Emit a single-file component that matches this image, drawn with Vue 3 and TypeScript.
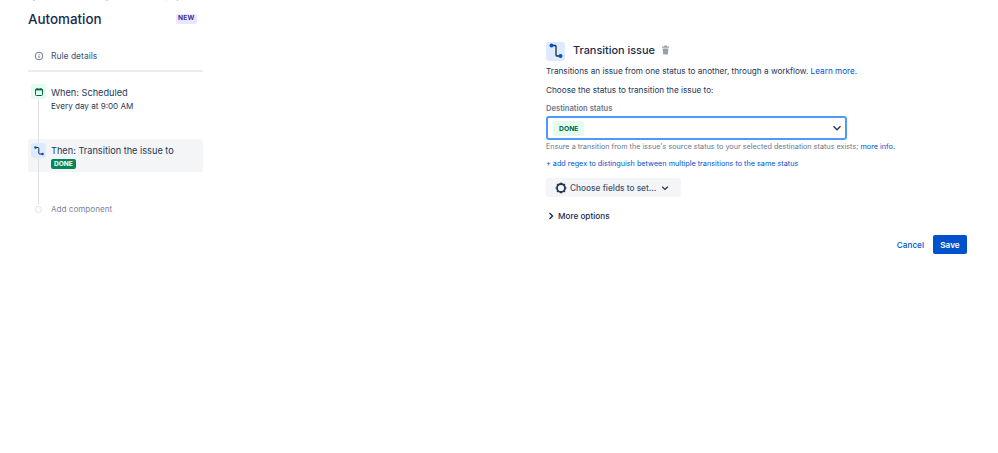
<script setup lang="ts">
const hints: string[] = ['Cancel', 'Save']
</script>

<template>
  <div class="page">
    <p class="cut">By default, rules run only for issues in this project, if needed</p>
    <div class="columns">
      <aside class="side">
        <div class="head">
          <h1>Automation</h1>
          <span class="new">NEW</span>
        </div>
        <div class="details">
          <svg class="info" width="10" height="10" viewBox="0 0 10 10">
            <circle cx="5" cy="5" r="3.8" fill="none" stroke="#6b778c" stroke-width="1" />
            <path d="M5 4.6v2.4M5 2.9v.9" stroke="#6b778c" stroke-width="1" />
          </svg>
          <span>Rule details</span>
        </div>
        <div class="steps">
          <div class="line"></div>
          <div class="step first">
            <span class="ico green">
              <svg width="10" height="10" viewBox="0 0 10 10">
                <rect x="1.5" y="2" width="7" height="6.5" rx="1" fill="none" stroke="#006644" stroke-width="1" />
                <rect x="1.5" y="2" width="7" height="1.4" fill="#006644" />
                <path d="M3.2 1v1.2M6.8 1v1.2" stroke="#006644" stroke-width="0.9" />
              </svg>
            </span>
            <div>
              <div class="title">When: Scheduled</div>
              <div class="sub">Every day at 9:00 AM</div>
            </div>
          </div>
          <div class="step active">
            <span class="ico blue">
              <svg width="12" height="12" viewBox="0 0 12 12">
                <path d="M2.5 2.5H5Q5.8 2.5 5.8 3.3V8.2Q5.8 9 6.6 9H9.5" fill="none" stroke="#172b4d" stroke-width="1" />
                <circle cx="2.5" cy="2.5" r="1.3" fill="#0052cc" />
                <circle cx="9.5" cy="9" r="1.3" fill="#0052cc" />
              </svg>
            </span>
            <div>
              <div class="title">Then: Transition the issue to</div>
              <span class="lozenge">DONE</span>
            </div>
          </div>
          <div class="add">
            <span class="dot"></span>
            <span>Add component</span>
          </div>
        </div>
      </aside>

      <main class="panel">
        <div class="panel-head">
          <span class="big-ico">
            <svg width="16" height="18" viewBox="0 0 16 18">
              <path d="M3 3.5H7.2Q8 3.5 8 4.4V13Q8 14 9 14H13" fill="none" stroke="#172b4d" stroke-width="1.3" />
              <circle cx="3.5" cy="3.5" r="2" fill="#0052cc" />
              <circle cx="12.5" cy="14" r="2" fill="#0052cc" />
            </svg>
          </span>
          <h2>Transition issue</h2>
          <svg class="trash" width="9" height="10" viewBox="0 0 9 10">
            <path d="M1 1.6H8V2.8H1ZM3.2 .6H5.8V1.6H3.2ZM1.6 3.4H7.4L6.8 9.6H2.2Z" fill="#97a0af" />
          </svg>
        </div>
        <p class="text desc">Transitions an issue from one status to another, through a workflow. <a>Learn more.</a></p>
        <p class="text choose">Choose the status to transition the issue to:</p>
        <label>Destination status</label>
        <div class="select">
          <span class="done">DONE</span>
          <svg width="12" height="12" viewBox="0 0 12 12">
            <path d="M2.5 4.2 6 7.7 9.5 4.2" fill="none" stroke="#253858" stroke-width="1.4" />
          </svg>
        </div>
        <p class="hint">Ensure a transition from the issue's source status to your selected destination status exists; <a>more info.</a></p>
        <p class="hint regex"><a>+ add regex to distinguish between multiple transitions to the same status</a></p>
        <button class="fields">
          <svg width="12" height="12" viewBox="0 0 12 12">
            <circle cx="6" cy="6" r="4" fill="none" stroke="#253858" stroke-width="1.8" />
            <path d="M6 .4V2M6 10V11.6M.4 6H2M10 6H11.6M2 2 3.1 3.1M8.9 8.9 10 10M2 10 3.1 8.9M8.9 3.1 10 2" stroke="#253858" stroke-width="1.2" />
          </svg>
          <span>Choose fields to set...</span>
          <svg class="small-chev" width="8" height="8" viewBox="0 0 8 8">
            <path d="M1.2 2.8 4 5.4 6.8 2.8" fill="none" stroke="#253858" stroke-width="1.4" />
          </svg>
        </button>
        <div class="more">
          <svg width="6" height="8" viewBox="0 0 6 8">
            <path d="M1.5 1 4.5 4 1.5 7" fill="none" stroke="#172b4d" stroke-width="1.4" />
          </svg>
          <span>More options</span>
        </div>
        <div class="actions">
          <a class="cancel">{{ hints[0] }}</a>
          <button class="save">{{ hints[1] }}</button>
        </div>
      </main>
    </div>
  </div>
</template>

<style>
body {
  background: #fff;
}
</style>

<style scoped>
.page {
  height: 453px;
  overflow: hidden;
  font-family: Inter, "Liberation Sans", sans-serif;
  color: #172b4d;
}

.cut {
  margin: -8px 0 0 28px;
  height: 10px;
  font-size: 6.9px;
  line-height: 10px;
  color: #6b778c;
  white-space: nowrap;
}

.columns {
  display: flex;
  padding: 0 31px 0 28px;
}

.side {
  width: 175px;
  flex: none;
}

.head {
  display: flex;
  align-items: center;
  justify-content: space-between;
  padding: 7px 6px 0 0;
  height: 20px;
}

h1 {
  margin: 0;
  font-size: 13.4px;
  font-weight: 500;
  line-height: 20px;
}

.new {
  background: #eae6ff;
  color: #403294;
  font-size: 6.6px;
  font-weight: 700;
  line-height: 9.5px;
  padding: 0 2.5px;
  border-radius: 2px;
  letter-spacing: 0.2px;
}

.details {
  display: flex;
  align-items: center;
  gap: 7px;
  margin-top: 15px;
  padding: 0 0 2px 6px;
  height: 24px;
  border-bottom: 2px solid #ebecf0;
  font-size: 8.5px;
  color: #42526e;
}

.steps {
  position: relative;
  margin-top: 12px;
}

.line {
  position: absolute;
  left: 10px;
  top: 10px;
  width: 1px;
  height: 111px;
  background: #dfe1e6;
}

.step {
  display: flex;
  gap: 5px;
  padding: 0 3px;
  border-radius: 3px;
}

.first {
  height: 55px;
}

.active {
  height: 33px;
  padding-top: 4px;
  box-sizing: border-box;
  background: #f4f5f7;
}

.ico {
  position: relative;
  flex: none;
  width: 15px;
  height: 15px;
  border-radius: 3px;
  display: flex;
  align-items: center;
  justify-content: center;
}

.green {
  background: #e3fcef;
}

.blue {
  background: #deebff;
}

.first .title {
  margin-top: 1px;
}

.title {
  padding-top: 1px;
  font-size: 9.2px;
  line-height: 14px;
  color: #253858;
}

.sub {
  font-size: 8.1px;
  line-height: 12px;
  color: #253858;
}

.lozenge {
  display: block;
  width: fit-content;
  margin-top: 1px;
  background: #00875a;
  color: #fff;
  font-size: 6.6px;
  font-weight: 700;
  line-height: 10px;
  padding: 0 3px;
  border-radius: 2px;
}

.add {
  position: relative;
  display: flex;
  align-items: center;
  gap: 9px;
  margin-top: 30px;
  padding-left: 7px;
  font-size: 8.1px;
  line-height: 14px;
  color: #7a869a;
}

.dot {
  width: 5px;
  height: 5px;
  border-radius: 50%;
  background: #fff;
  border: 1px solid #dfe1e6;
}

.panel {
  margin-left: 343px;
  flex: 1;
  padding-top: 39px;
}

.panel-head {
  display: flex;
  align-items: center;
  height: 20px;
}

.big-ico {
  width: 19px;
  height: 19px;
  background: #deebff;
  border-radius: 3px;
  display: flex;
  align-items: center;
  justify-content: center;
}

h2 {
  margin: 0 6px 2px 8px;
  font-size: 10.9px;
  font-weight: 500;
  line-height: 16px;
}

.trash {
  margin-bottom: 2px;
}

.text {
  margin: 0;
  font-size: 8.2px;
  line-height: 12px;
  color: #253858;
}

.desc {
  margin-top: 4px;
}

.choose {
  margin-top: 7px;
}

a {
  color: #0052cc;
}

label {
  display: block;
  margin-top: 8px;
  font-size: 7.6px;
  font-weight: 600;
  line-height: 10px;
  color: #6b778c;
}

.select {
  margin-top: 2px;
  width: 301px;
  height: 24px;
  box-sizing: border-box;
  border: 2px solid #4c9aff;
  border-radius: 3px;
  display: flex;
  align-items: center;
  justify-content: space-between;
  padding: 0 2px 0 5px;
}

.done {
  background: #e3fcef;
  color: #006644;
  font-size: 6.8px;
  font-weight: 700;
  line-height: 15px;
  padding: 0 6px;
  border-radius: 2px;
}

.hint {
  margin: 1px 0 0;
  font-size: 7.25px;
  line-height: 11px;
  color: #6b778c;
}

.regex {
  margin-top: 6px;
}

.fields {
  display: flex;
  align-items: center;
  width: 135px;
  height: 19px;
  margin-top: 9px;
  padding: 0 0 0 9px;
  border: 0;
  border-radius: 3px;
  background: #f4f5f7;
  color: #42526e;
  font: 500 8.3px Inter, "Liberation Sans", sans-serif;
  gap: 3px;
}

.small-chev {
  margin-left: 2px;
}

.more {
  display: flex;
  align-items: center;
  gap: 4px;
  margin-top: 13px;
  padding-left: 2px;
  font-size: 8.2px;
  font-weight: 500;
  line-height: 12px;
}

.actions {
  display: flex;
  align-items: center;
  justify-content: flex-end;
  gap: 9px;
  margin-top: 13px;
}

.cancel {
  font-size: 8.2px;
  font-weight: 500;
}

.save {
  width: 34px;
  height: 19px;
  padding: 0;
  border: 0;
  border-radius: 2px;
  background: #0052cc;
  color: #fff;
  font: 600 8.2px Inter, "Liberation Sans", sans-serif;
}
</style>
